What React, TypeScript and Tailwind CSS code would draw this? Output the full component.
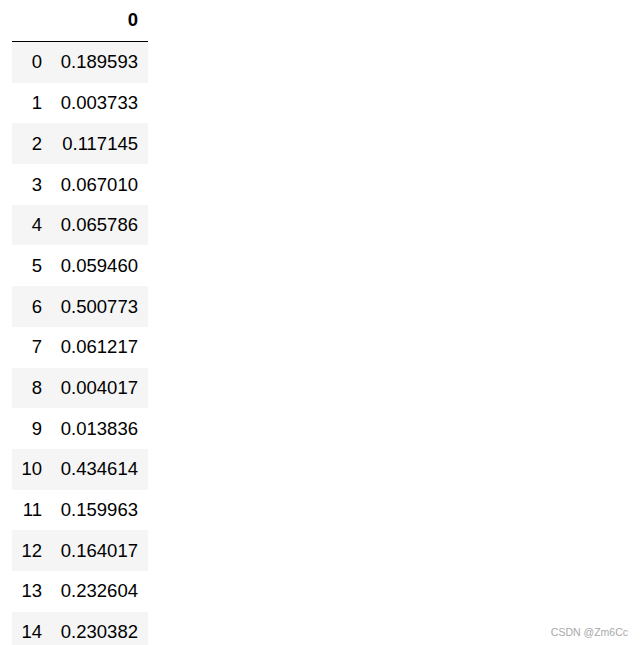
const values = [
  '0.189593',
  '0.003733',
  '0.117145',
  '0.067010',
  '0.065786',
  '0.059460',
  '0.500773',
  '0.061217',
  '0.004017',
  '0.013836',
  '0.434614',
  '0.159963',
  '0.164017',
  '0.232604',
  '0.230382',
]

export default function App() {
  return (
    <div className="relative h-[645px] w-[642px] overflow-hidden bg-white font-['Liberation_Sans',Arial,sans-serif] text-[18.5px] text-black">
      <div className="ml-3 w-[136px]">
        {/* header */}
        <div className="flex h-[42px] items-center border-b border-black pb-[2px]">
          <div className="w-[40px]" />
          <div className="flex-1 pr-[10px] text-right font-bold">0</div>
        </div>
        {values.map((v, i) => (
          <div
            key={i}
            className={`flex h-[40.7px] items-center ${i % 2 === 0 ? 'bg-[#f5f5f5]' : 'bg-white'}`}
          >
            <div className="w-[40px] pr-[10px] text-right">{i}</div>
            <div className="flex-1 pr-[10px] text-right">{v}</div>
          </div>
        ))}
      </div>
      <div className="absolute right-[14px] top-[625px] font-['Liberation_Sans',Arial,sans-serif] text-[10.5px] text-[#a8a8a8]">
        CSDN @Zm6Cc
      </div>
    </div>
  )
}
